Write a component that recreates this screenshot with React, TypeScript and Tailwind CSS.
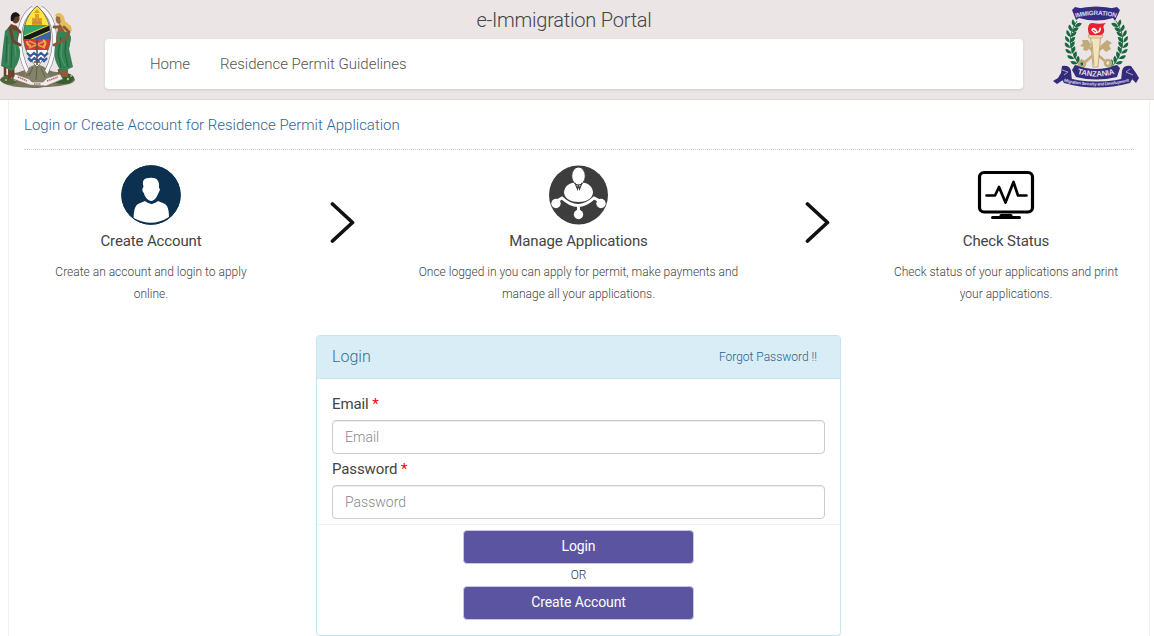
import type { ReactNode } from 'react';

const shieldWaves = ['M27 53 l3.500 3 l3.500 -3 l3.500 3 l3.500 -3 l3.500 3 l3.500 -3', 'M28 58 l3 3 l3.500 -3 l3 3 l3.500 -3 l3 3 l3 -3'];

function CoatOfArms() {
  return (
    <svg width="76" height="84" viewBox="0 5 76 84" className="block shrink-0">
      <path d="M0 80 C3 73 13 75 22 71 C29 69 31 65 37 65 C45 65 48 72 57 72 C66 73 74 73 75 80 C72 87 49 86 38 88 C24 88 4 87 0 80Z" fill="#77765c" />
      <path d="M0 80 C5 73 16 74 21 78 L14 84 C7 85 3 84 0 80Z" fill="#4f6639" />
      <path d="M58 78 C59 71 71 72 74 78 C73 84 64 85 56 83Z" fill="#365f30" />
      <g fill="#c1b786">
        <circle cx="60" cy="78" r="1.200" /><circle cx="64" cy="76" r="1" /><circle cx="68" cy="79" r="1.200" /><circle cx="71" cy="76" r="1" />
        <circle cx="6" cy="80" r="1" /><circle cx="11" cy="78" r="1" /><circle cx="15" cy="80" r="1" />
      </g>
      {/* tusks */}
      <path d="M33 8 C17 19 15 47 28 73" fill="none" stroke="#777680" strokeWidth="4.600" />
      <path d="M33 8 C17 19 15 47 28 73" fill="none" stroke="#f8f8fa" strokeWidth="3.500" />
      <path d="M41 8 C57 19 59 47 46 73" fill="none" stroke="#777680" strokeWidth="4.600" />
      <path d="M41 8 C57 19 59 47 46 73" fill="none" stroke="#f8f8fa" strokeWidth="3.500" />
      <path d="M24 76 L30 67 L36 64 L43 68 L50 77 L44 82 L29 82Z" fill="#85826a" />
      <path d="M29 76 L33 67 M36 80 L37 67 M45 77 L41 68 M26 76 L31 72" stroke="#5d5e45" fill="none" />
      {/* male bearer */}
      <path d="M11 24 L17 26 L19 34 L17 43 L18 53 L14 71 L11 79 L8 79 L8 65 L5 48 L6 31Z" fill="#71432c" />
      <path d="M5 31 L10 26 L14 31 L18 30 L17 42 L20 50 C21 59 16 68 12 71 L1 66 L3 47Z" fill="#348255" />
      <path d="M7 36 L6 63 M12 42 L11 68" stroke="#246141" strokeWidth="1.100" fill="none" />
      <path d="M9 44 L8 65 M15 45 L16 57" stroke="#5aa078" strokeWidth=".8" />
      <ellipse cx="15.600" cy="18" rx="4" ry="5.400" fill="#633c2a" />
      <path d="M11 21 C9 11 18 10 20 16 L15 17 L13 21Z" fill="#181717" />
      <path d="M10 28 L13 41 L20 45 M16 28 L20 32" stroke="#6d422e" strokeWidth="3" fill="none" strokeLinecap="round" />
      <path d="M5 67 L5 76 M13 70 L14 79" stroke="#64412d" strokeWidth="2.500" />
      {/* female bearer */}
      <path d="M59 24 L67 27 L71 38 L68 53 L68 77 L62 77 L57 60 L56 38Z" fill="#8f5d3d" />
      <path d="M57 32 L64 32 L68 29 L71 38 L69 49 L73 67 L62 72 C56 65 53 57 55 46 L58 38Z" fill="#348355" />
      <path d="M61 37 L58 53 L61 68 M66 38 L65 53 L68 67" stroke="#22603a" fill="none" />
      <path d="M62 43 L61 56 L65 66" stroke="#57a276" strokeWidth=".8" fill="none" />
      <ellipse cx="59" cy="19" rx="3.300" ry="5" fill="#9c6946" />
      <path d="M55 16 C56 11 64 12 65 21 L71 26 L72 31 L65 32 L61 25 L60 17Z" fill="#e5bd59" />
      <path d="M64 27 L69 32 L66 39 L54 45 M59 27 L54 27" stroke="#895837" strokeWidth="2.800" fill="none" strokeLinecap="round" />
      <path d="M59 69 L60 77" stroke="#77513a" strokeWidth="2.500" />
      <clipPath id="shield"><path d="M37 6 C54 20 56 48 37 67 C18 48 20 20 37 6Z" /></clipPath>
      <g clipPath="url(#shield)">
        <path d="M20 4H54V26H20Z" fill="#ffe33f" />
        <path d="M20 25H54V40H20Z" fill="#35a466" />
        <path d="M54 25V40H23Z" fill="#3b5fac" />
        <path d="M20 41 L54 26" stroke="#f8df46" strokeWidth="6.500" />
        <path d="M20 41 L54 26" stroke="#171a1a" strokeWidth="4.700" />
        <path d="M20 39H54V50H20Z" fill="#db353c" />
        <path d="M20 50H54V70H20Z" fill="#fff" />
      </g>
      <path d="M32 25 V18 H35 V14 H39 V18 H42 V25Z M34 13 L37 9 L40 13Z" fill="#dca02d" />
      <path d="M32 23H42 M35 19V23 M39 19V23" stroke="#bc852c" />
      {shieldWaves.map((d) => <path key={d} d={d} stroke="#355aa9" strokeWidth="2.300" fill="none" />)}
      <path d="M29 48 L45 41 M29 41 L45 48" stroke="#dfa146" strokeWidth="1.600" />
      <path d="M27 41 Q27 45 31 46 M43 40 Q48 43 43 47" stroke="#eab045" strokeWidth="2.200" fill="none" />
      <path d="M37 39 V65 M34 62H40" stroke="#575148" strokeWidth="1.500" />
      <path d="M37 6 C54 20 56 48 37 67 C18 48 20 20 37 6Z" fill="none" stroke="#4b5949" strokeWidth=".8" />
      <path d="M15 74 L29 79 L32 82 H43 L47 78 L60 74 L63 79 L46 86 L30 85 L13 79Z" fill="#efebeb" stroke="#716d63" strokeWidth=".6" />
      <path d="M18 77 L27 81 M34 84 H41 M47 81 L58 77" stroke="#bd5e5e" strokeWidth="1.500" strokeDasharray="1.500 .7" />
    </svg>
  );
}

const leaves: [number, number, number][] = [
  [36, 24, 25], [33, 29, 18], [31, 34, 12], [30, 39.500, 5], [30, 45, -5],
  [31, 50.500, -15], [33, 56, -25], [36, 61, -35], [40, 65, -45],
];

function Laurel() {
  return (
    <g fill="#17683e">
      <path d="M37 21 Q22 42 41 67" fill="none" stroke="#2d7552" />
      {leaves.map(([x, y, angle]) => (
        <g key={y} transform={`translate(${x} ${y}) rotate(${angle})`}>
          <path d="M0 3 Q-6 2 -5 -3 Q-1 -2 0 3Z" />
          <path d="M0 3 Q0 -3 5 -3 Q5 2 0 3Z" />
        </g>
      ))}
    </g>
  );
}

function ImmigrationCrest() {
  return (
    <svg width="88" height="85" viewBox="12 5 88 85" className="block shrink-0" fontFamily="Liberation Sans, Arial, sans-serif" fontWeight="700">
      <defs>
        <path id="top-arc" d="M34 18 Q56 12 78 18" />
        <path id="name-arc" d="M35 72 Q56 79 77 72" />
        <path id="motto-arc" d="M22 81 Q56 90 91 81" />
      </defs>
      <Laurel />
      <g transform="translate(113 0) scale(-1 1)"><Laurel /></g>
      <path d="M35 7 Q56 13 77 7 L80 10 L75 21 L73 18 Q56 23 39 18 L36 20 L32 10Z" fill="#352d80" />
      <path d="M36 9 Q56 4 76 9 L75 18 Q56 14 37 18Z" fill="#352d80" />
      <text fontSize="6.300" fill="#dddafa"><textPath href="#top-arc" startOffset="50%" textAnchor="middle" textLength="41">IMMIGRATION</textPath></text>
      <g stroke="#c3aa7a" strokeWidth="2.600" fill="none">
        <path d="M44 63 L65 45 M66 62 L46 45" />
        <circle cx="42" cy="64" r="3" /><circle cx="68" cy="63" r="3" />
      </g>
      <path d="M42 40 L48 40 L51 45 L47 51 L43 50 L44 47 L40 46 L43 43Z M67 40 L72 43 L69 45 L71 49 L66 52 L60 46Z" fill="#c3aa7a" />
      <path d="M50.500 37H60.500L58 67H53Z" fill="#f3e4bd" stroke="#b59a64" strokeWidth=".8" />
      <path d="M52 42L54 65" stroke="#c0a773" />
      <path d="M48 35H63L62 38H49Z" fill="#ead7ac" stroke="#9b8965" strokeWidth=".5" />
      <path d="M49 34 C47 29 48 22 53 23 C57 24 61 24 66 23 Q62 26 64 29 Q65 33 61 35H50Z" fill="#e72331" />
      <path d="M51 30 Q53 26 56 29 L58 32 L60 27 Q62 28 60 32 L55 34Z" fill="#fff0ed" />
      <path d="M53 30 L56 32" stroke="#d72e3a" />
      <path d="M22 66 Q30 65 31 71 L32 81 L23 80 L17 84 L13 81 L18 78 L21 73Z M91 66 Q83 65 82 71 L81 81 L91 78 L96 83 L99 78 L96 73Z" fill="#342b7c" />
      <path d="M22 70 L28 72 L24 75 M90 69 L86 72 L93 75" stroke="#a7a0c7" strokeWidth="1" fill="none" />
      <path d="M35 65 Q56 73 77 65 L80 68 L77 77 Q56 82 36 77 L32 70Z" fill="#342b7c" />
      <text fontSize="7.800" fill="#e0ddf4" transform="translate(0 1)"><textPath href="#name-arc" startOffset="50%" textAnchor="middle" textLength="38">TANZANIA</textPath></text>
      <path d="M20 76 Q56 87 94 76 L90 83 Q56 92 24 83Z" fill="#342b7c" />
      <text fontSize="4.400" fill="#d7d4ed"><textPath href="#motto-arc" startOffset="50%" textAnchor="middle" textLength="66">Migration Security and Development</textPath></text>
    </svg>
  );
}

function AccountIcon() {
  return (
    <svg width="60" height="60" viewBox="0 0 60 60" className="-ml-px">
      <circle cx="30" cy="30" r="29.700" fill="#0b3050" />
      <path d="M22.500 22 C20 13 26 13 28 13 C35 12 39 15 38 23 C40 24 38 27 37 29 C35 34 32 36 30.500 36 C27 36 23 31 23 28 C21 27 21 23 22.500 22Z" fill="#fff" />
      <path d="M24 36 L30.500 39 L37 36 L43 38.500 C47 40 48 46 48 52 Q31 63 12.500 53 C13 45 14 40 18 38.500Z" fill="#fff" />
      <path d="M24 35 Q30.500 41 37 35" fill="none" stroke="#0b3050" strokeWidth="1.300" />
      <circle cx="30" cy="30" r="29.200" fill="none" stroke="#0b3050" />
    </svg>
  );
}

function ManageIcon() {
  return (
    <svg width="60" height="60" viewBox="0 0 60 60">
      <circle cx="29.500" cy="30" r="29.500" fill="#3d3d3d" />
      <path d="M15 28 C15 21 21 17.500 26 17.500 H33 C39 17.500 44 22 44 28 C43 34 37 37 29.500 37 C22 37 16 34 15 28Z" fill="#fff" />
      <ellipse cx="29.500" cy="11" rx="6.800" ry="9" fill="#fff" stroke="#3d3d3d" strokeWidth="1" />
      <path d="M26 18 L28.500 24 L29.500 20 L30.500 24 L33 18" fill="none" stroke="#3d3d3d" strokeWidth="1.200" />
      <path d="M6 37 L13 33 Q29 48 45 33 L53 37 M29.500 41V50" fill="none" stroke="#fff" strokeWidth="3" />
      <circle cx="7" cy="38.500" r="4.700" fill="#fff" /><circle cx="52" cy="38.500" r="4.700" fill="#fff" /><circle cx="29.500" cy="49.500" r="4.700" fill="#fff" />
    </svg>
  );
}

function StatusIcon() {
  return (
    <svg width="60" height="60" viewBox="0 0 60 60" fill="none" stroke="#000" strokeLinecap="round" className="-ml-px">
      <rect x="3.500" y="7.500" width="53" height="39.500" rx="4.500" strokeWidth="3.200" />
      <path d="M10.500 30.500 H19 L23 22 L29.500 37.500 L37.500 17 L42 30.500 H50.500" strokeWidth="2.700" strokeLinejoin="round" />
      <path d="M16.500 52.500 H43.500" strokeWidth="3" /><path d="M25 50.500H35" strokeWidth="3" />
    </svg>
  );
}

function Step({ icon, title, children, wide = false }: { icon: ReactNode; title: string; children: ReactNode; wide?: boolean }) {
  return (
    <div className={`${wide ? 'col-span-4' : 'col-span-3'} flex flex-col items-center px-[15px] text-center`}>
      {icon}
      <h2 className="mt-[6px] -ml-px text-[15px] leading-5 font-normal tracking-[-0.13px] text-[#444]">{title}</h2>
      <p className="mt-[10px] -ml-px px-[14px] text-[12px] leading-[22px] text-[#444]">{children}</p>
    </div>
  );
}

function Arrow() {
  return (
    <div className="flex justify-center pt-[36px]">
      <svg width="26" height="43" viewBox="0 0 26 43" fill="none" stroke="#111" strokeWidth="3.700" strokeLinecap="round" strokeLinejoin="round"><path d="M3.500 3 L23.500 21.500 L3.500 40" /></svg>
    </div>
  );
}

function Field({ label, type }: { label: string; type: string }) {
  return (
    <label className="block text-[15px] leading-5 font-normal text-[#333]">
      <span className="tracking-[-0.1px] text-[#444]">{label} <span className="text-[#f00]">*</span></span>
      <input type={type} placeholder={label} className="mt-[6px] block h-[34px] w-full rounded border border-[#ccc] bg-white px-3 text-[14px] font-light shadow-[inset_0_1px_1px_rgba(0,0,0,0.075)] placeholder:text-[#888]" />
    </label>
  );
}

const button = 'block h-[34px] w-[231px] rounded-[4px] border border-[#c9c5e5] bg-[#5b54a0] pb-[2px] text-[14px] font-normal tracking-[-0.1px] text-white';

export default function App() {
  return (
    <div className="h-[636px] overflow-hidden bg-white font-['Roboto',sans-serif] font-light text-[#333]">
      <header className="flex h-[100px] border-b border-[#ddd5d6] bg-[#ebe5e6] pt-[5px]">
        <CoatOfArms />
        <div className="ml-[29px] w-[918px]">
          <h1 className="h-[34px] text-center text-[20px] leading-[30px] font-light tracking-[-0.23px] text-[#444]">e-Immigration Portal</h1>
          <nav className="flex h-[50px] items-center gap-[30px] rounded bg-white pl-[45px] text-[15px] tracking-[-0.02px] text-[#555] shadow-[0_1px_3px_rgba(0,0,0,0.13)]">
            <a>Home</a><a>Residence Permit Guidelines</a>
          </nav>
        </div>
        <div className="ml-[29px]"><ImmigrationCrest /></div>
      </header>
      <main className="ml-[8px] h-[536px] w-[1142px] border-x border-[#f0f0f0]">
        <h2 className="mx-[15px] h-[50px] border-b border-dotted border-[#ccc] pt-[15px] text-[15px] leading-5 tracking-[-0.01px] text-[#31659a]">Login or Create Account for Residence Permit Application</h2>
        <section className="grid h-[185px] grid-cols-12 pt-[15px]">
          <Step icon={<AccountIcon />} title="Create Account">Create an account and login to apply online.</Step>
          <Arrow />
          <Step wide icon={<ManageIcon />} title="Manage Applications">Once logged in you can apply for permit, make payments and manage all your applications.</Step>
          <Arrow />
          <Step icon={<StatusIcon />} title="Check Status">Check status of your applications and print your applications.</Step>
        </section>
        <section className="ml-[307px] h-[301px] w-[525px] rounded border border-[#c5e5ee] bg-white shadow-[0_1px_1px_rgba(0,0,0,0.05)]">
          <div className="flex h-[43px] items-center justify-between border-b border-[#c5e5ee] bg-[#d9edf7] pr-[23px] pl-[15px] text-[#31708f]">
            <h3 className="text-[16px]">Login</h3><a className="text-[12px] text-[#286090]">Forgot Password !!</a>
          </div>
          <form className="pt-[15px]">
            <div className="flex flex-col gap-[5px] px-[15px]">
              <Field label="Email" type="email" />
              <Field label="Password" type="password" />
            </div>
            <div className="mt-[5px] flex flex-col items-center border-t border-[#f2f2f2] pt-[5px]">
              <button type="button" className={button}>Login</button>
              <span className="h-[22px] text-[12px] leading-[22px]">OR</span>
              <button type="button" className={button}>Create Account</button>
            </div>
          </form>
        </section>
      </main>
    </div>
  );
}
